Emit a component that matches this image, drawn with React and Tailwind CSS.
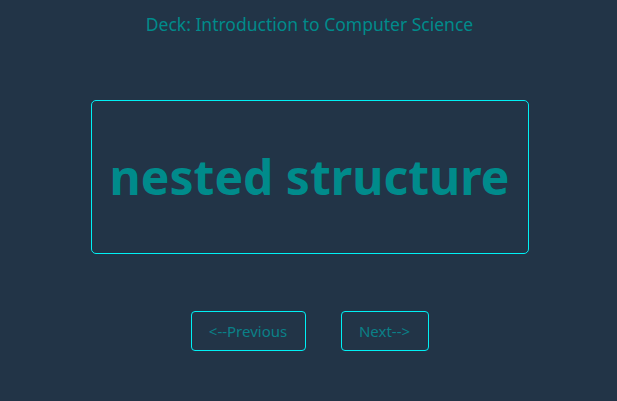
import React, { useState } from 'react';

const cards = [
  { front: 'nested structure' },
];

export default function App() {
  const [index, setIndex] = useState(0);

  return (
    <div
      className="min-h-screen w-full bg-[#223447] flex flex-col items-center pl-[2px]"
      style={{ fontFamily: '"Noto Sans", "Open Sans", sans-serif' }}
    >
      <h1 className="mt-[12px] text-[17.5px] leading-[24px] text-[#008b8b]">
        Deck: Introduction to Computer Science
      </h1>

      <div className="mt-[64px] w-[438px] h-[154px] border border-[#00f0f5] rounded-[5px] flex items-center justify-center">
        <p className="text-[48px] font-bold text-[#008b8b] leading-none">
          {cards[index].front}
        </p>
      </div>

      <div className="mt-[57px] flex gap-[35px]">
        <button
          className="w-[115px] h-[40px] border border-[#00f0f5] rounded-[4px] text-[15px] text-[#0a8088]"
          onClick={() => setIndex(Math.max(0, index - 1))}
        >
          &lt;--Previous
        </button>
        <button
          className="w-[88px] h-[40px] border border-[#00f0f5] rounded-[4px] text-[15px] text-[#0a8088]"
          onClick={() => setIndex(Math.min(cards.length - 1, index + 1))}
        >
          Next--&gt;
        </button>
      </div>
    </div>
  );
}
